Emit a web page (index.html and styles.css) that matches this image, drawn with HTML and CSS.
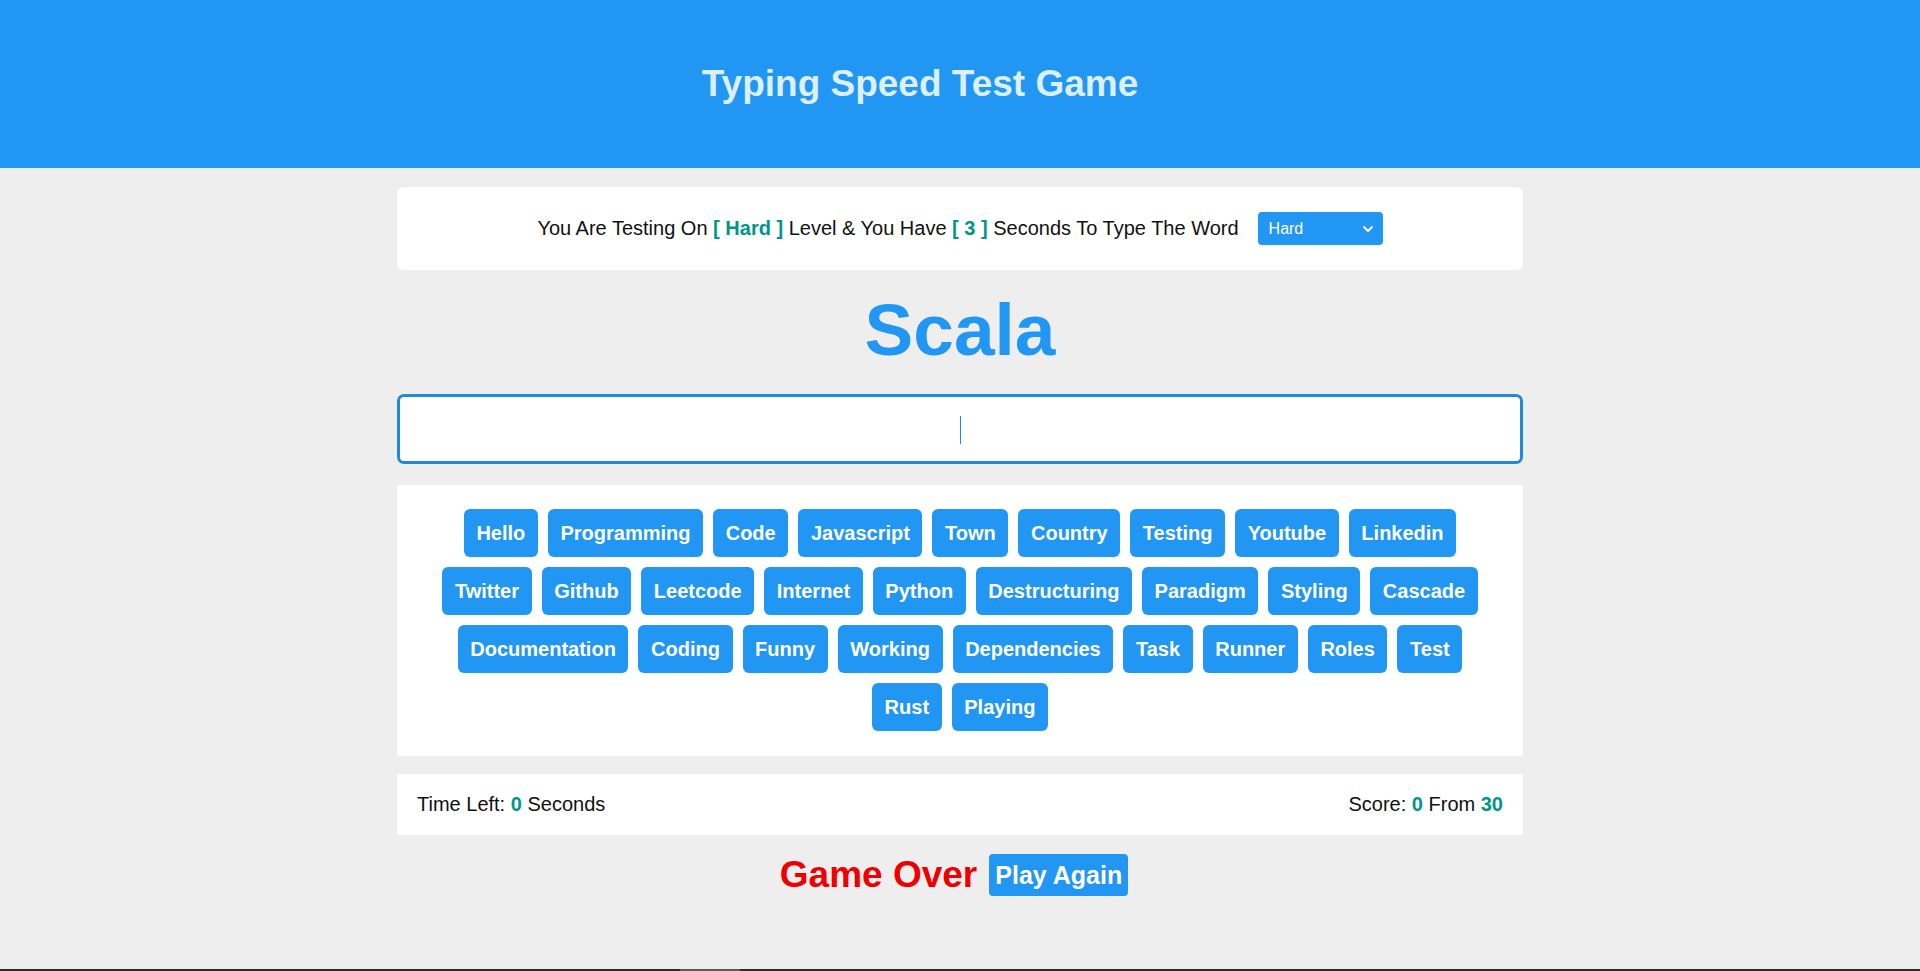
FILE: index.html
```html
<!DOCTYPE html>
<html lang="en">
<head>
<meta charset="utf-8">
<title>Typing Speed Test Game</title>
<link rel="stylesheet" href="styles.css">
</head>
<body>
<header class="site-header">
  <h1 class="site-title">Typing Speed Test Game</h1>
</header>
<main class="game">
  <div class="message">
    <span class="message-text">You Are Testing On <span class="accent">[ Hard ]</span> Level &amp; You Have <span class="accent">[ 3 ]</span> Seconds To Type The Word</span>
    <span class="select-wrap">
      <select class="level-select">
        <option>Easy</option>
        <option>Normal</option>
        <option selected>Hard</option>
      </select>
      <svg class="select-arrow" width="10" height="6" viewBox="0 0 10 6" aria-hidden="true"><path d="M1 1 L5 5 L9 1" fill="none" stroke="#fff" stroke-width="1.8" stroke-linecap="round" stroke-linejoin="round"/></svg>
    </span>
  </div>
  <div class="the-word">Scala</div>
  <div class="input-wrap">
    <input class="input" type="text" autofocus>
    <span class="caret"></span>
  </div>
  <div class="upcoming-words">
    <div class="chip">Hello</div>
    <div class="chip">Programming</div>
    <div class="chip">Code</div>
    <div class="chip">Javascript</div>
    <div class="chip">Town</div>
    <div class="chip">Country</div>
    <div class="chip">Testing</div>
    <div class="chip">Youtube</div>
    <div class="chip">Linkedin</div>
    <div class="chip">Twitter</div>
    <div class="chip">Github</div>
    <div class="chip">Leetcode</div>
    <div class="chip">Internet</div>
    <div class="chip">Python</div>
    <div class="chip">Destructuring</div>
    <div class="chip">Paradigm</div>
    <div class="chip">Styling</div>
    <div class="chip">Cascade</div>
    <div class="chip">Documentation</div>
    <div class="chip">Coding</div>
    <div class="chip">Funny</div>
    <div class="chip">Working</div>
    <div class="chip">Dependencies</div>
    <div class="chip">Task</div>
    <div class="chip">Runner</div>
    <div class="chip">Roles</div>
    <div class="chip">Test</div>
    <div class="chip">Rust</div>
    <div class="chip">Playing</div>
  </div>
  <div class="control">
    <div class="time">Time Left: <span class="accent">0</span> Seconds</div>
    <div class="score">Score: <span class="accent">0</span> From <span class="accent">30</span></div>
  </div>
  <div class="finish">
    <span class="bad">Game Over</span>
    <button class="again" type="button">Play Again</button>
  </div>
</main>
<div class="scroll-strip"><div class="scroll-thumb"></div></div>
</body>
</html>
```
FILE: styles.css
```css
* { box-sizing: border-box; }

html, body {
  margin: 0;
  padding: 0;
}

body {
  background: #eeeeee;
  font-family: "Liberation Sans", Arial, sans-serif;
  color: #111;
  min-height: 971px;
}

.site-header {
  height: 168px;
  background: #2196f3;
  display: flex;
  align-items: center;
  justify-content: center;
}

.site-title {
  margin: 0 80px 0 0;
  font-size: 37px;
  font-weight: bold;
  color: #dbeffd;
}

.game {
  width: 1126px;
  margin: 0 auto;
  display: flex;
  flex-direction: column;
}

.message {
  margin-top: 19px;
  height: 83px;
  background: #fff;
  border-radius: 7px;
  display: flex;
  align-items: center;
  justify-content: center;
  gap: 19px;
  font-size: 20px;
}

.accent {
  color: #009688;
  font-weight: bold;
}

.select-wrap {
  position: relative;
  display: inline-block;
  width: 125px;
  height: 33px;
}

.level-select {
  appearance: none;
  -webkit-appearance: none;
  width: 125px;
  height: 33px;
  border: none;
  border-radius: 4px;
  background: #2196f3;
  color: #fff;
  font-family: "Liberation Sans", Arial, sans-serif;
  font-size: 16px;
  padding: 0 0 0 11px;
  outline: none;
}

.select-arrow {
  position: absolute;
  right: 10px;
  top: 14px;
  pointer-events: none;
}

.the-word {
  margin-top: 19px;
  text-align: center;
  font-size: 73px;
  font-weight: bold;
  color: #2196f3;
  line-height: 82px;
}

.input-wrap {
  position: relative;
  margin-top: 23px;
  height: 70px;
}

.input {
  display: block;
  height: 70px;
  width: 100%;
  border: 3px solid #2089dc;
  border-radius: 7px;
  background: #fff;
  font-family: "Liberation Sans", Arial, sans-serif;
  font-size: 25px;
  text-align: center;
  caret-color: transparent;
  outline: none;
}

.caret {
  position: absolute;
  left: 563px;
  top: 22px;
  width: 1px;
  height: 28px;
  background: #1e88e5;
  pointer-events: none;
}

.upcoming-words {
  margin-top: 21px;
  background: #fff;
  padding: 19px 20px 20px;
  display: flex;
  flex-wrap: wrap;
  justify-content: center;
  border-radius: 2px;
}

.chip {
  margin: 5px;
  padding: 12px 12.6px;
  line-height: 24px;
  font-size: 20px;
  font-weight: bold;
  color: #fff;
  background: #2196f3;
  border-radius: 6px;
}

.control {
  margin-top: 18px;
  height: 61px;
  background: #fff;
  display: flex;
  align-items: center;
  justify-content: space-between;
  padding: 0 20px;
  font-size: 20px;
  border-radius: 2px;
}

.finish {
  margin-top: 19px;
  display: flex;
  align-items: center;
  justify-content: center;
  gap: 12px;
  padding-right: 12px;
}

.bad {
  font-size: 37px;
  font-weight: bold;
  color: #ee0000;
}

.again {
  border: none;
  border-radius: 4px;
  background: #2196f3;
  color: #fff;
  font-family: "Liberation Sans", Arial, sans-serif;
  font-size: 25px;
  font-weight: bold;
  line-height: 30px;
  padding: 6px 6px;
}

.scroll-strip {
  position: fixed;
  left: 0;
  right: 0;
  bottom: 0;
  height: 2px;
  background: #2b2b2b;
}

.scroll-thumb {
  position: absolute;
  left: 680px;
  width: 60px;
  top: 0;
  height: 2px;
  background: #5a5a5a;
}
```
